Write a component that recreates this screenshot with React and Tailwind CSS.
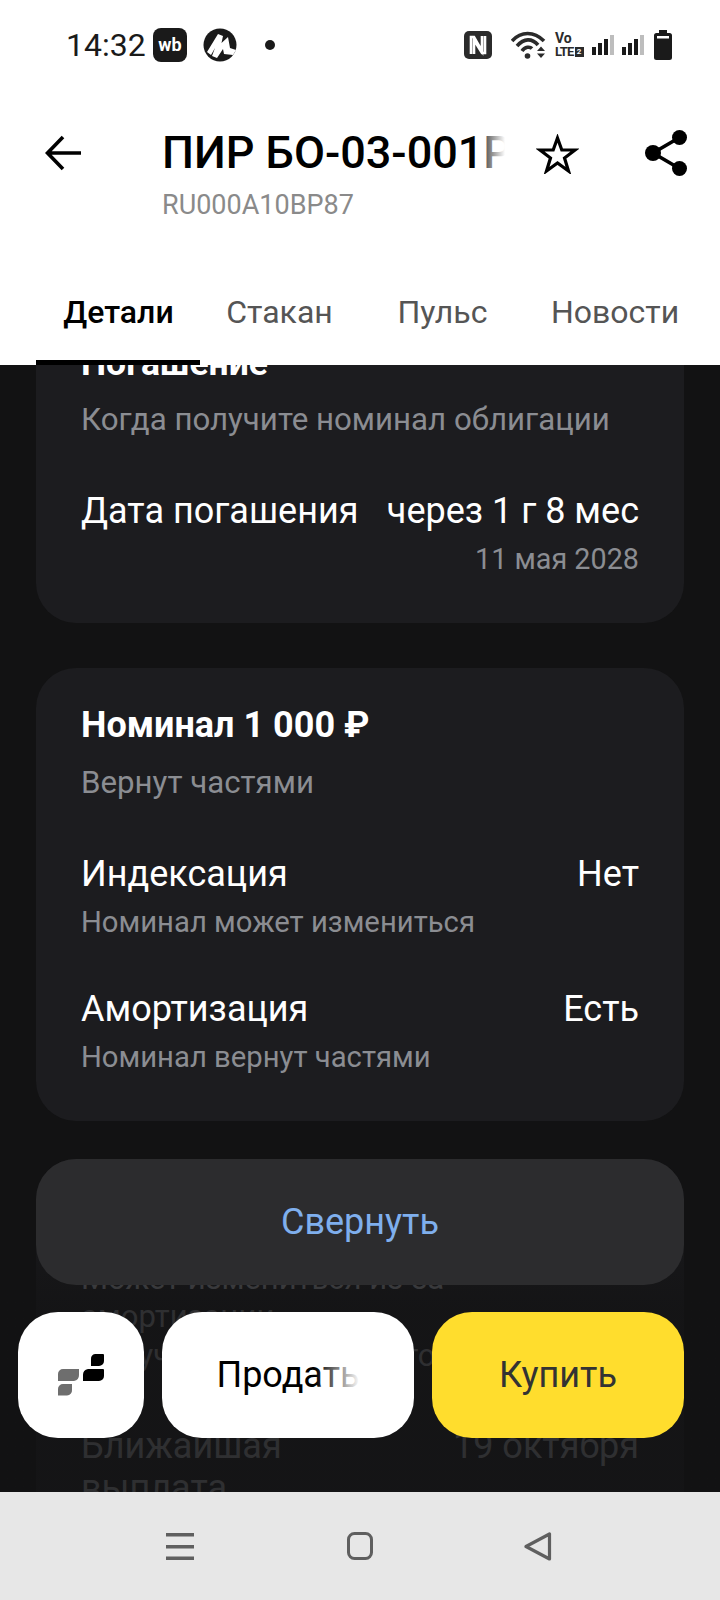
import React from 'react';

const StatusBar = () => (
  <div className="h-[90px] flex items-center text-[#1a1a1a] shrink-0 pl-[66px] pr-[48px]">
    <span className="text-[32px] leading-none w-[87px]">14:32</span>
    <div className="w-[34px] h-[34px] rounded-[8px] bg-[#1a1a1a] flex items-center justify-center text-white text-[18px] font-bold leading-none">wb</div>
    <svg className="ml-[16px]" width="34" height="34" viewBox="0 0 34 34">
      <circle cx="17" cy="17" r="16.5" fill="#1a1a1a" />
      <path d="M4 24 L15 6 L20 8 L18.500 15 L25 9 L27 20 L33 22 L30 27 L21 26 L20 21 L14 30 L9 28 L12 20 L8 27 Z" fill="#fff" />
    </svg>
    <div className="ml-[28px] w-[10px] h-[10px] rounded-full bg-[#1a1a1a]" />
    <div className="flex-1" />
    <svg width="28" height="28" viewBox="0 0 28 28">
      <rect width="28" height="28" rx="5" fill="#2b2b2b" />
      <path d="M7 23V6h3l8 14V5M21 5v17h-3L10 9v14" fill="none" stroke="#fff" strokeWidth="2.600" />
    </svg>
    <svg className="ml-[19px]" width="35" height="28" viewBox="0 0 35 28">
      <path d="M1 10C10 0 23 0 33 10" fill="none" stroke="#2b2b2b" strokeWidth="3.600" />
      <path d="M6 15C13 7 21 7 27 14" fill="none" stroke="#2b2b2b" strokeWidth="3.600" />
      <path d="M11 20C14 15.500 19 15.500 21 17.500" fill="none" stroke="#2b2b2b" strokeWidth="3.600" />
      <circle cx="16.500" cy="25" r="2.800" fill="#2b2b2b" />
      <path d="M26 20l4-4.500 4 4.500zM26 22.500h8l-4 4.500z" fill="#2b2b2b" />
    </svg>
    <div className="ml-[9px] w-[30px] h-[28px] flex flex-col text-[#2b2b2b] font-bold leading-none">
      <span className="text-[14px] h-[14px]">Vo</span>
      <div className="flex items-center">
        <span className="text-[13px] tracking-[-0.8px]">LTE</span>
        <span className="ml-px w-[9px] h-[10px] bg-[#2b2b2b] text-white text-[8px] flex items-center justify-center">2</span>
      </div>
    </div>
    <svg className="ml-[7px]" width="22" height="22" viewBox="0 0 22 22">
      <rect x="0" y="13" width="4" height="8" fill="#1a1a1a" />
      <rect x="6" y="9" width="4" height="12" fill="#1a1a1a" />
      <rect x="12" y="5" width="4" height="16" fill="#1a1a1a" />
      <rect x="18" y="1" width="4" height="20" fill="#bdbdbd" />
    </svg>
    <svg className="ml-[8px]" width="22" height="22" viewBox="0 0 22 22">
      <rect x="0" y="13" width="4" height="8" fill="#1a1a1a" />
      <rect x="6" y="9" width="4" height="12" fill="#1a1a1a" />
      <rect x="12" y="5" width="4" height="16" fill="#1a1a1a" />
      <rect x="18" y="1" width="4" height="20" fill="#bdbdbd" />
    </svg>
    <svg className="ml-[10px]" width="18" height="30" viewBox="0 0 18 30">
      <path d="M5 0h8v3h2.500A2.500 2.500 0 0 1 18 5.500V27.500A2.500 2.500 0 0 1 15.500 30H2.500A2.500 2.500 0 0 1 0 27.500V5.500A2.500 2.500 0 0 1 2.500 3H5z" fill="#1a1a1a" />
      <rect x="3" y="6" width="12" height="2.500" fill="#fff" />
    </svg>
  </div>
);

const Header = () => (
  <div className="h-[130px] flex items-start shrink-0">
    <svg className="ml-[45px] mt-[45px] shrink-0" width="36" height="36" viewBox="0 0 36 36">
      <path d="M36 18H3M18 2L2.500 18L18 34" fill="none" stroke="#000" strokeWidth="3.600" />
    </svg>
    <div className="ml-[81px] mt-[33px] w-[343px] shrink-0">
      <div className="relative overflow-hidden whitespace-nowrap text-[45px] leading-[60px] font-medium text-black">
        ПИР БО-03-001Р
        <div className="absolute right-0 top-0 bottom-0 w-[30px] bg-gradient-to-r from-transparent to-white" />
      </div>
      <div className="text-[27px] leading-[32px] text-[#8a8a8a] mt-[6px]">RU000A10BP87</div>
    </div>
    <svg className="ml-[31px] mt-[44px] shrink-0" width="43" height="40" viewBox="0 0 43 40">
      <path d="M21.500 4L25.800 16H39L28.500 24L32.500 37L21.500 29L10.500 37L14.500 24L4 16H17.200Z" fill="none" stroke="#000" strokeWidth="3.200" />
    </svg>
    <svg className="ml-[66px] mt-[40px] shrink-0" width="42" height="46" viewBox="0 0 42 46">
      <circle cx="8" cy="23" r="8" fill="#000" />
      <circle cx="34.500" cy="7.500" r="7.500" fill="#000" />
      <circle cx="34.500" cy="38.500" r="7.500" fill="#000" />
      <path d="M34.500 7.500L8 23L34.500 38.500" fill="none" stroke="#000" strokeWidth="3.600" />
    </svg>
  </div>
);

const tabs = [
  { label: 'Детали', w: 'w-[165px]', cls: 'text-black font-medium' },
  { label: 'Стакан', w: 'w-[157px]', cls: 'text-[#555555]' },
  { label: 'Пульс', w: 'w-[169px]', cls: 'text-[#555555]' },
  { label: 'Новости', w: 'w-[176px]', cls: 'text-[#555555]' },
];

const Tabs = () => (
  <div className="h-[145px] pt-[80px] pl-[36px] flex bg-white shrink-0 relative z-10">
    {tabs.map((t) => (
      <div key={t.label} className={`${t.w} h-[65px] pb-[42px] flex items-center justify-center text-[32px] leading-none ${t.cls}`}>
        {t.label}
      </div>
    ))}
    <div className="absolute left-[36px] bottom-0 w-[164px] h-[5px] bg-black" />
  </div>
);

const Row = ({ label, value, sub, mt }) => (
  <div className={mt}>
    <div className="flex justify-between text-[36px] leading-[40px] text-white">
      <span>{label}</span>
      <span>{value}</span>
    </div>
    {sub && <div className="text-[29.25px] leading-[36px] mt-[10px] text-[#8b8d92]">{sub}</div>}
  </div>
);

const Content = () => (
  <div className="flex-1 min-h-0 overflow-hidden relative bg-[#121213]">
    <div className="mx-[36px] -mt-[60px] flex flex-col gap-[45px]">
      <div className="bg-[#1c1c1f] rounded-[40px] h-[318px] pt-[38px] px-[45px]">
        <div className="text-[35.5px] leading-[40px] font-bold text-white">Погашение</div>
        <div className="text-[31.25px] leading-[40px] text-[#8b8d92] mt-[17px]">Когда получите номинал облигации</div>
        <Row mt="mt-[51px]" label="Дата погашения" value="через 1 г 8 мес" />
        <div className="text-[28.75px] leading-[36px] text-right text-[#8b8d92] mt-[10px]">11 мая 2028</div>
      </div>

      <div className="bg-[#1c1c1f] rounded-[40px] h-[453px] pt-[37px] px-[45px]">
        <div className="text-[36px] leading-[40px] font-bold text-white">Номинал 1 000 ₽</div>
        <div className="text-[31.25px] leading-[40px] text-[#8b8d92] mt-[18px]">Вернут частями</div>
        <Row mt="mt-[51px]" label="Индексация" value="Нет" sub="Номинал может измениться" />
        <Row mt="mt-[49px]" label="Амортизация" value="Есть" sub="Номинал вернут частями" />
      </div>

      <div className="bg-[#1c1c1f] rounded-[40px] h-[420px] pt-[100px] px-[45px] text-[#85878c] -mt-[7px]">
        <div className="text-[31px] leading-[40px]">Может измениться из-за</div>
        <div className="text-[31px] leading-[40px] mt-[-2px]">амортизации</div>
        <div className="text-[31px] leading-[40px] whitespace-nowrap mt-[-1px]">Получите номинал в этот</div>
        <div className="flex justify-between text-[36px] leading-[42px] mt-[49px]">
          <span className="w-[240px]">Ближайшая выплата</span>
          <span>19 октября</span>
        </div>
      </div>
    </div>

    {/* затемнение под кнопками */}
    <div className="absolute inset-x-0 top-[760px] bottom-0 bg-gradient-to-b from-[#121213]/0 via-[#121213]/75 to-[#121213]/75" />

    <div className="absolute left-[36px] right-[36px] top-[794px] h-[126px] rounded-[40px] bg-[#2c2c2e] flex items-center justify-center text-[36px] text-[#7fafed]">
      Свернуть
    </div>

    <div className="absolute left-[18px] right-[36px] top-[947px] flex gap-[18px]">
      <div className="w-[126px] h-[126px] rounded-[40px] bg-white flex items-center justify-center">
        <svg width="46" height="42" viewBox="0 0 46 42">
          <path d="M37 0H45a1 1 0 0 1 1 1V7a5 5 0 0 1-5 5H33V5a5 5 0 0 1 4-5z" fill="#000" />
          <path d="M30 15H45a1 1 0 0 1 1 1V22a5 5 0 0 1-5 5H25V21a6 6 0 0 1 5-6z" fill="#000" />
          <path d="M5 15H21V21a6 6 0 0 1-5 6H0V20a5 5 0 0 1 5-5z" fill="#6e6e6e" />
          <path d="M5 30H14V36a5 5 0 0 1-5 5.500H0V35a5 5 0 0 1 5-5z" fill="#6e6e6e" />
        </svg>
      </div>
      <div className="w-[252px] h-[126px] rounded-[40px] bg-white flex items-center justify-center text-[36px] text-black">
        <span className="relative overflow-hidden whitespace-nowrap">
          Продать
          <span className="absolute right-0 inset-y-0 w-[45px] bg-gradient-to-r from-transparent to-white" />
        </span>
      </div>
      <div className="flex-1 h-[126px] rounded-[40px] bg-[#ffdd2d] flex items-center justify-center text-[36px] text-[#333333]">
        Купить
      </div>
    </div>
  </div>
);

const NavBar = () => (
  <div className="h-[108px] shrink-0 bg-[#e7e7e7] flex items-start pt-[40px] pl-[166px]">
    <svg width="28" height="28" viewBox="0 0 28 28">
      <rect x="0" y="1" width="28" height="3.500" fill="#5f5f5f" />
      <rect x="0" y="13" width="28" height="3.500" fill="#5f5f5f" />
      <rect x="0" y="24.500" width="28" height="3.500" fill="#5f5f5f" />
    </svg>
    <svg className="ml-[153px]" width="26" height="28" viewBox="0 0 26 28">
      <rect x="1.500" y="1.500" width="23" height="25" rx="6" fill="none" stroke="#5f5f5f" strokeWidth="3" />
    </svg>
    <svg className="ml-[151px]" width="28" height="29" viewBox="0 0 28 29">
      <path d="M25.500 2V27L2 14.500z" fill="none" stroke="#5f5f5f" strokeWidth="3.200" strokeLinejoin="round" />
    </svg>
  </div>
);

export default function App() {
  return (
    <div className="w-[720px] h-[1600px] bg-white flex flex-col overflow-hidden" style={{ fontFamily: 'Roboto, sans-serif' }}>
      <StatusBar />
      <Header />
      <Tabs />
      <Content />
      <NavBar />
    </div>
  );
}
